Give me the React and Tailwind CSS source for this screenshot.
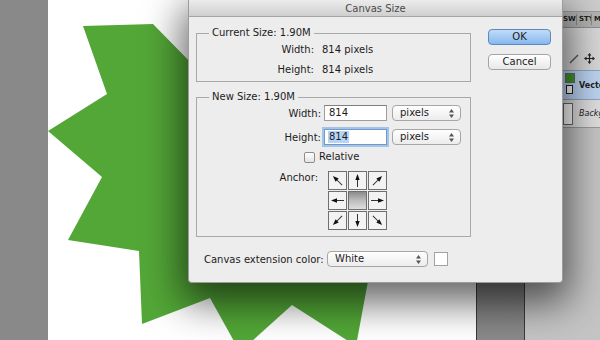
// Photoshop "Canvas Size" dialog over a workspace with a green star
const Arrow = ({ angle }) => (
  <svg width="17" height="17" viewBox="0 0 17 17">
    <g transform={`rotate(${angle} 8.5 8.5)`}>
      <line x1="8.5" y1="15" x2="8.5" y2="6" stroke="#333" strokeWidth="1" />
      <polygon points="8.5,2 6.3,8 10.7,8" fill="#111" />
    </g>
  </svg>
)

const SelectArrows = () => (
  <svg width="5" height="9" viewBox="0 0 5 9">
    <polygon points="2.5,0 5,3.5 0,3.5" fill="#555" />
    <polygon points="0,5.5 5,5.5 2.5,9" fill="#555" />
  </svg>
)

const Select = ({ value, className = '' }) => (
  <div className={`h-[16px] flex items-center justify-between pl-[7px] pr-[6px] rounded-[4px] border border-[#a6a6a6] bg-linear-to-b from-white to-[#ececec] ${className}`}>
    <span className="leading-[14px]">{value}</span>
    <SelectArrows />
  </div>
)

const anchors = [315, 0, 45, 270, null, 90, 225, 180, 135]

const AnchorGrid = () => (
  <div className="grid grid-cols-[19px_19px_19px] gap-[1px]">
    {anchors.map((angle, i) =>
      angle === null ? (
        <div key={i} className="h-[19px] border border-[#6f6f6f] bg-linear-to-b from-[#8c8c8c] via-[#bdbdbd] to-[#dedede]" />
      ) : (
        <div key={i} className="h-[19px] border border-[#6f6f6f] bg-[#f3f3f3] flex items-center justify-center">
          <Arrow angle={angle} />
        </div>
      )
    )}
  </div>
)

const Star = () => (
  <svg width="428" height="340" viewBox="48 0 428 340" className="block">
    <polygon
      fill="#53a737"
      points="83,26 153,24 200,72 250,20 300,70 360,30 370,100 440,110 400,170 450,220 376,238 356,346 292,305 240,352 210,298 142,324 139,251 68,240 102,177 48,131 107,94"
    />
  </svg>
)

const LayersPanel = () => (
  <div className="flex flex-col text-[#222]">
    <div className="h-[12px] bg-[#cdcdcd] border-b border-[#9a9a9a]" />
    <div className="h-[16px] bg-[#b3b3b3] border-b border-[#8f8f8f] flex items-center text-[7px] font-bold pl-[37px] whitespace-nowrap">
      <span className="w-[15px] shrink-0 border-r border-[#888] pl-[1px]">SW</span>
      <span className="w-[15px] shrink-0 border-r border-[#888] pl-[2px] overflow-hidden">STY</span>
      <span className="pl-[2px]">M</span>
    </div>
    <div className="h-[42px] bg-[#d7d7d7] flex items-end pb-[6px] pl-[44px] gap-[5px]">
      <svg width="10" height="10" viewBox="0 0 10 10" className="shrink-0">
        <line x1="1" y1="9" x2="9" y2="1" stroke="#555" strokeWidth="1.4" />
      </svg>
      <svg width="11" height="11" viewBox="0 0 11 11" className="shrink-0">
        <path d="M5.5 0 L7.5 2.5 H3.5 Z M5.5 11 L3.5 8.5 H7.5 Z M0 5.5 L2.5 3.5 V7.5 Z M11 5.5 L8.5 7.5 V3.5 Z" fill="#222" />
        <path d="M5.5 2 V9 M2 5.5 H9" stroke="#222" strokeWidth="1.2" />
      </svg>
      <svg width="8" height="11" viewBox="0 0 8 11" className="shrink-0">
        <rect x="0.5" y="4.5" width="7" height="6" fill="#333" />
        <path d="M2 4.5 V2.5 a2 2 0 0 1 4 0 V4.5" stroke="#333" fill="none" />
      </svg>
    </div>
    <div className="h-[30px] bg-[#bcd3f0] border-y border-[#8fa5c2] flex whitespace-nowrap">
      <div className="w-[38px] shrink-0" />
      <div className="w-[13px] shrink-0 flex flex-col items-center pt-[2px] gap-[2px]">
        <div className="w-[10px] h-[10px] bg-[#3f9a2a] border border-[#6a6a6a]" />
        <div className="w-[7px] h-[9px] border border-[#222] bg-white" />
      </div>
      <span className="ml-[3px] mt-[9px] text-[8px] font-bold">Vector</span>
    </div>
    <div className="h-[28px] bg-[#dedede] border-b border-[#9a9a9a] flex items-center whitespace-nowrap">
      <div className="w-[38px] shrink-0" />
      <div className="w-[10px] h-[22px] shrink-0 border border-[#6a6a6a] bg-white" />
      <span className="ml-[6px] text-[8px] italic">Background</span>
    </div>
  </div>
)

export default function App() {
  return (
    <div className="relative w-[600px] h-[340px] overflow-hidden text-[10px] text-[#1c1c1c] font-['DejaVu_Sans',sans-serif]">
      {/* workspace */}
      <div className="flex h-full">
        <div className="w-[48px] shrink-0 bg-[#898989]" />
        <div className="w-[428px] shrink-0 bg-white">
          <Star />
        </div>
        <div className="w-[49px] shrink-0 border-x border-[#3a3a3a] bg-linear-to-b from-[#4a4a4a] to-[#8a8a8a]" />
        <div className="flex-1 min-w-0 overflow-hidden flex flex-col bg-[#c4c4c4]">
          <LayersPanel />
        </div>
      </div>

      {/* dialog */}
      <div className="absolute left-[188px] top-0 w-[375px] h-[283px] rounded-b-[4px] bg-[#ededed] border border-t-0 border-[#9c9c9c] shadow-[0_14px_38px_6px_rgba(0,0,0,0.6)] flex flex-col">
        <div className="h-[17px] leading-[17px] text-center text-[#4a4a4a] bg-linear-to-b from-[#ececec] to-[#cfcfcf] border-b border-[#a5a5a5]">
          Canvas Size
        </div>
        <div className="flex">
          <div className="w-[282px] pl-[7px]">
            <fieldset className="mt-[10px] w-[275px] border border-[#a8a8a8]">
              <legend className="ml-[12px] px-[3px] leading-[12px]">Current Size: 1.90M</legend>
              <div className="flex flex-col gap-[6px] pt-[4px] pb-[4px]">
                <div className="flex h-[14px] leading-[14px]">
                  <span className="w-[117px] text-right">Width:</span>
                  <span className="ml-[8px]">814 pixels</span>
                </div>
                <div className="flex h-[14px] leading-[14px]">
                  <span className="w-[117px] text-right">Height:</span>
                  <span className="ml-[8px]">814 pixels</span>
                </div>
              </div>
            </fieldset>

            <fieldset className="mt-[9px] w-[275px] border border-[#a8a8a8]">
              <legend className="ml-[12px] px-[3px] leading-[12px]">New Size: 1.90M</legend>
              <div className="flex flex-col pt-[2px] pb-[6px]">
                <div className="flex items-center h-[16px]">
                  <span className="w-[124px] text-right">Width:</span>
                  <div className="ml-[3px] w-[63px] h-[16px] border border-[#9d9d9d] border-t-[#7e7e7e] bg-white pl-[4px] leading-[14px]">814</div>
                  <Select value="pixels" className="ml-[5px] w-[69px]" />
                </div>
                <div className="flex items-center h-[16px] mt-[8px]">
                  <span className="w-[124px] text-right">Height:</span>
                  <div className="ml-[3px] w-[63px] h-[16px] border border-[#6b9ad2] bg-white pl-[3px] shadow-[0_0_0_2px_rgba(110,160,220,0.55)] flex items-center">
                    <span className="bg-[#b6d4f8] leading-[12px] px-[1px]">814</span>
                  </div>
                  <Select value="pixels" className="ml-[5px] w-[69px]" />
                </div>
                <div className="flex items-center h-[12px] mt-[6px] pl-[107px]">
                  <div className="w-[11px] h-[11px] rounded-[2px] border border-[#8d8d8d] bg-linear-to-b from-white to-[#e3e3e3]" />
                  <span className="ml-[4px] leading-[12px]">Relative</span>
                </div>
                <div className="flex mt-[8px]">
                  <span className="w-[121px] text-right leading-[12px] pt-[1px]">Anchor:</span>
                  <div className="ml-[10px]">
                    <AnchorGrid />
                  </div>
                </div>
              </div>
            </fieldset>

            <div className="mt-[14px] pl-[8px] flex items-center h-[16px]">
              <span className="w-[123px] whitespace-nowrap">Canvas extension color:</span>
              <Select value="White" className="w-[101px]" />
              <div className="ml-[6px] w-[14px] h-[14px] border border-[#a3a3a3] bg-white" />
            </div>
          </div>

          <div className="ml-[17px] w-[63px] pt-[12px] flex flex-col gap-[9px]">
            <div className="h-[16px] leading-[14px] text-center rounded-[4px] border border-[#5f89bb] bg-linear-to-b from-[#c2dcf8] to-[#85b8ee]">
              OK
            </div>
            <div className="h-[16px] leading-[14px] text-center rounded-[4px] border border-[#a5a5a5] bg-linear-to-b from-white to-[#e8e8e8]">
              Cancel
            </div>
          </div>
        </div>
      </div>
    </div>
  )
}
